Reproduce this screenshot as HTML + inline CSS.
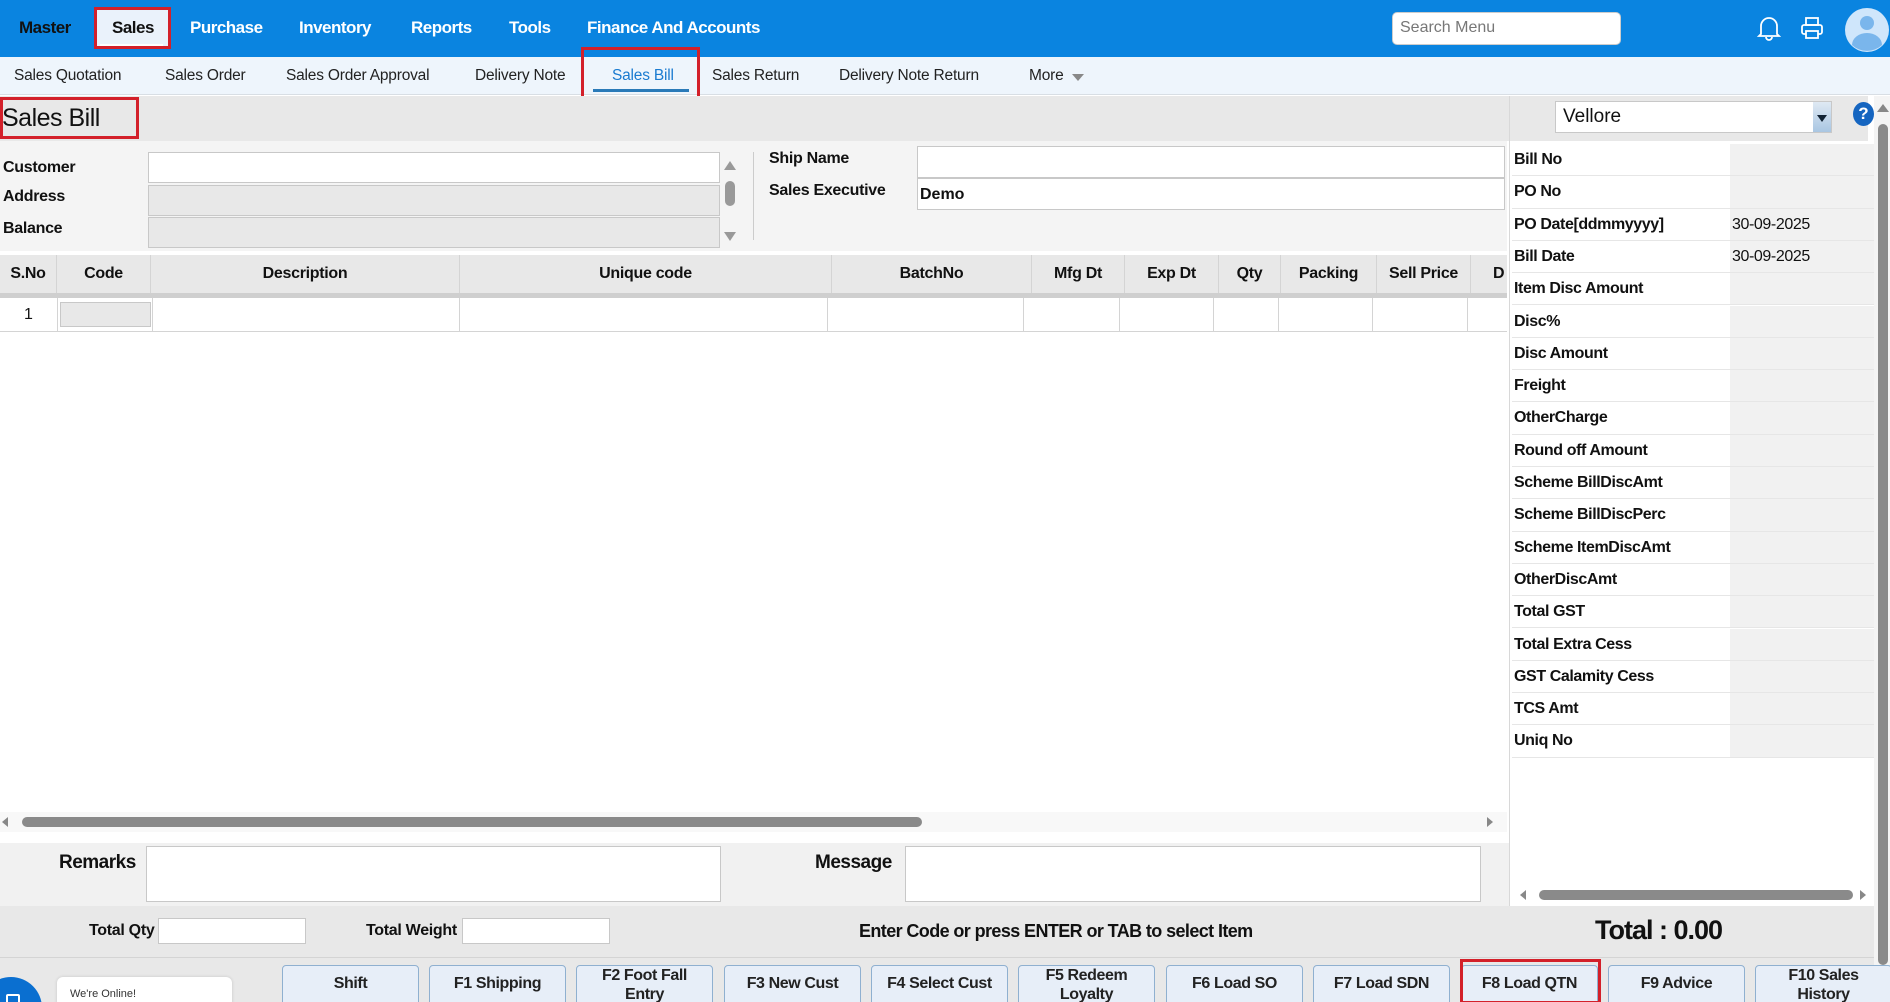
<!DOCTYPE html>
<html><head><meta charset="utf-8"><style>
*{box-sizing:border-box;margin:0;padding:0}
html{width:1890px;height:1002px;overflow:hidden}
body{width:1890px;height:1002px;overflow:hidden;position:relative;background:#fff;font-family:"Liberation Sans",sans-serif;color:#111}
.a{position:absolute}
.top{left:0;top:0;width:1890px;height:57px;background:#0a84e0}
.m{top:18px;font-size:17px;font-weight:bold;color:#fff;letter-spacing:-0.5px}
.sub{left:0;top:57px;width:1890px;height:38px;background:#eef5fc;border-bottom:1px solid #d8dee4}
.s{top:67px;font-size:15.5px;color:#222;letter-spacing:-0.2px}
.red{border:3px solid #d3202a}
.lbl{font-size:16px;font-weight:bold;letter-spacing:-0.3px}
.inp{background:#fff;border:1px solid #c8c8c8}
.ginp{background:#e8e8e8;border:1px solid #c8c8c8}
.th{top:255px;height:38px;background:#e8e8e8;border-right:1px solid #d4d4d4;font-size:16px;font-weight:bold;text-align:center;line-height:38px;letter-spacing:-0.3px}
.td{top:298px;height:34px;border-right:1px solid #d4d4d4;border-bottom:1px solid #d4d4d4}
.rr{left:1512px;width:362px;height:32.3px;border-bottom:1px solid #e6e6e6;font-size:16px;font-weight:bold;letter-spacing:-0.4px}
.rr span{position:absolute;left:2px;top:7px}
.rr i{position:absolute;left:218px;top:0;width:144px;height:100%;background:#f1f1f1;font-style:normal;font-weight:normal;padding:7px 0 0 2px}
.btn{top:965px;width:137px;height:45px;background:#e7eef8;border:1px solid #8fb0d0;border-radius:4px;font-size:16px;font-weight:bold;text-align:center;letter-spacing:-0.4px;color:#222}
</style></head><body>
<div class="a top"></div>
<div class="a m" style="left:19px;color:#111">Master</div>
<div class="a" style="left:95px;top:7px;width:76px;height:42px;background:#eaf2fb" ></div>
<div class="a red" style="left:94px;top:7px;width:77px;height:42px"></div>
<div class="a" style="left:100px;top:44px;width:63px;height:2px;background:#fff"></div>
<div class="a m" style="left:112px;color:#111">Sales</div>
<div class="a m" style="left:190px">Purchase</div>
<div class="a m" style="left:299px">Inventory</div>
<div class="a m" style="left:411px">Reports</div>
<div class="a m" style="left:509px">Tools</div>
<div class="a m" style="left:587px">Finance And Accounts</div>
<div class="a" style="left:1392px;top:12px;width:229px;height:33px;background:#fff;border-radius:5px;border:1px solid #ccc;font-size:16px;color:#777;padding:6px 0 0 7px">Search Menu</div>
<svg class="a" style="left:1756px;top:14px" width="26" height="28" viewBox="0 0 26 28"><path d="M5 20V12a8 8 0 0 1 16 0v8l2 2H3z M10 23a3 3 0 0 0 6 0" fill="none" stroke="#fff" stroke-width="1.8"/></svg>
<svg class="a" style="left:1800px;top:16px" width="24" height="24" viewBox="0 0 24 24"><rect x="6" y="2" width="12" height="7" fill="none" stroke="#fff" stroke-width="1.8"/><rect x="2" y="9" width="20" height="9" rx="2" fill="none" stroke="#fff" stroke-width="1.8"/><rect x="6" y="15" width="12" height="7" fill="#0a84e0" stroke="#fff" stroke-width="1.8"/></svg>
<svg class="a" style="left:1844px;top:7px" width="46" height="46" viewBox="0 0 46 46"><circle cx="23" cy="23" r="22" fill="#cfe6fb"/><circle cx="23" cy="16" r="7" fill="#7ab6ec"/><path d="M8 38a15 12 0 0 1 30 0a22 22 0 0 1-30 0z" fill="#7ab6ec"/></svg>

<div class="a sub"></div>
<div class="a s" style="left:14px">Sales Quotation</div>
<div class="a s" style="left:165px">Sales Order</div>
<div class="a s" style="left:286px">Sales Order Approval</div>
<div class="a s" style="left:475px">Delivery Note</div>
<div class="a s" style="left:612px;color:#1a7bd0">Sales Bill</div>
<div class="a" style="left:593px;top:89px;width:96px;height:3px;background:#2a7ab8"></div>
<div class="a red" style="left:581px;top:47px;width:119px;height:57px"></div>
<div class="a s" style="left:712px">Sales Return</div>
<div class="a s" style="left:839px">Delivery Note Return</div>
<div class="a s" style="left:1029px">More</div>
<div class="a" style="left:1072px;top:74px;border-left:6px solid transparent;border-right:6px solid transparent;border-top:7px solid #888"></div>

<div class="a" style="left:0;top:96px;width:1868px;height:45px;background:#e8e8e8"></div>
<div class="a red" style="left:0;top:97px;width:139px;height:42px"></div>
<div class="a" style="left:2px;top:104px;font-size:25px;letter-spacing:-0.5px">Sales Bill</div>
<div class="a inp" style="left:1555px;top:101px;width:277px;height:32px;font-size:19px;padding:4px 0 0 7px">Vellore</div>
<div class="a" style="left:1813px;top:102px;width:18px;height:30px;background:linear-gradient(#dfe9f3,#a9c6e2)"></div>
<div class="a" style="left:1817px;top:115px;border-left:5px solid transparent;border-right:5px solid transparent;border-top:7px solid #123"></div>
<div class="a" style="left:1853px;top:102px;width:21px;height:24px;border-radius:50%;background:#1565c0;color:#fff;font-weight:bold;font-size:17px;text-align:center;line-height:24px">?</div>

<div class="a" style="left:0;top:141px;width:1507px;height:110px;background:#f4f4f4"></div>
<div class="a lbl" style="left:3px;top:159px">Customer</div>
<div class="a lbl" style="left:3px;top:188px">Address</div>
<div class="a lbl" style="left:3px;top:220px">Balance</div>
<div class="a inp" style="left:148px;top:152px;width:572px;height:31px"></div>
<div class="a ginp" style="left:148px;top:185px;width:572px;height:31px"></div>
<div class="a ginp" style="left:148px;top:217px;width:572px;height:31px"></div>
<div class="a" style="left:724px;top:161px;border-left:6px solid transparent;border-right:6px solid transparent;border-bottom:9px solid #999"></div>
<div class="a" style="left:725px;top:181px;width:10px;height:25px;border-radius:5px;background:#999"></div>
<div class="a" style="left:724px;top:232px;border-left:6px solid transparent;border-right:6px solid transparent;border-top:9px solid #999"></div>
<div class="a" style="left:753px;top:152px;width:1px;height:88px;background:#ccc"></div>
<div class="a lbl" style="left:769px;top:150px">Ship Name</div>
<div class="a lbl" style="left:769px;top:182px">Sales Executive</div>
<div class="a inp" style="left:917px;top:146px;width:588px;height:32px"></div>
<div class="a inp" style="left:917px;top:178px;width:588px;height:32px;font-size:16px;font-weight:bold;padding:7px 0 0 2px">Demo</div>

<div class="a" style="left:0;top:293px;width:1507px;height:5px;background:#cfcfcf"></div>
<div class="a th" style="left:0;width:57px">S.No</div>
<div class="a th" style="left:57px;width:94px">Code</div>
<div class="a th" style="left:151px;width:309px">Description</div>
<div class="a th" style="left:460px;width:372px">Unique code</div>
<div class="a th" style="left:832px;width:200px">BatchNo</div>
<div class="a th" style="left:1032px;width:93px">Mfg Dt</div>
<div class="a th" style="left:1125px;width:94px">Exp Dt</div>
<div class="a th" style="left:1219px;width:62px">Qty</div>
<div class="a th" style="left:1281px;width:96px">Packing</div>
<div class="a th" style="left:1377px;width:94px">Sell Price</div>
<div class="a th" style="left:1471px;width:36px;text-align:left;padding-left:22px;border:0">D</div>
<div class="a td" style="left:0;width:58px;font-size:16px;text-align:center;line-height:34px">1</div>
<div class="a td" style="left:58px;width:95px"></div>
<div class="a ginp" style="left:60px;top:302px;width:91px;height:25px"></div>
<div class="a td" style="left:153px;width:307px"></div>
<div class="a td" style="left:460px;width:368px"></div>
<div class="a td" style="left:828px;width:196px"></div>
<div class="a td" style="left:1024px;width:96px"></div>
<div class="a td" style="left:1120px;width:94px"></div>
<div class="a td" style="left:1214px;width:65px"></div>
<div class="a td" style="left:1279px;width:94px"></div>
<div class="a td" style="left:1373px;width:95px"></div>
<div class="a td" style="left:1468px;width:39px;border-right:0"></div>

<div class="a" style="left:0;top:812px;width:1507px;height:20px;background:#f8f8f8"></div>
<div class="a" style="left:2px;top:817px;border-top:5px solid transparent;border-bottom:5px solid transparent;border-right:6px solid #888"></div>
<div class="a" style="left:22px;top:817px;width:900px;height:10px;border-radius:5px;background:#8a8a8a"></div>
<div class="a" style="left:1487px;top:817px;border-top:5px solid transparent;border-bottom:5px solid transparent;border-left:6px solid #888"></div>

<div class="a" style="left:0;top:843px;width:1509px;height:63px;background:#f1f1f1"></div>
<div class="a" style="left:59px;top:852px;font-size:19px;font-weight:bold;letter-spacing:-0.5px">Remarks</div>
<div class="a inp" style="left:146px;top:846px;width:575px;height:56px"></div>
<div class="a" style="left:815px;top:852px;font-size:19px;font-weight:bold;letter-spacing:-0.5px">Message</div>
<div class="a inp" style="left:905px;top:846px;width:576px;height:56px"></div>

<div class="a" style="left:1509px;top:96px;width:1px;height:810px;background:#d8d8d8"></div>
<div class="a" style="left:1510px;top:141px;width:364px;height:765px;background:#fff"></div>
<div class="a rr" style="top:144px"><span>Bill No</span><i></i></div>
<div class="a rr" style="top:176.3px"><span>PO No</span><i></i></div>
<div class="a rr" style="top:208.6px"><span>PO Date[ddmmyyyy]</span><i>30-09-2025</i></div>
<div class="a rr" style="top:240.9px"><span>Bill Date</span><i>30-09-2025</i></div>
<div class="a rr" style="top:273.2px"><span>Item Disc Amount</span><i></i></div>
<div class="a rr" style="top:305.5px"><span>Disc%</span><i></i></div>
<div class="a rr" style="top:337.8px"><span>Disc Amount</span><i></i></div>
<div class="a rr" style="top:370.1px"><span>Freight</span><i></i></div>
<div class="a rr" style="top:402.4px"><span>OtherCharge</span><i></i></div>
<div class="a rr" style="top:434.7px"><span>Round off Amount</span><i></i></div>
<div class="a rr" style="top:467px"><span>Scheme BillDiscAmt</span><i></i></div>
<div class="a rr" style="top:499.3px"><span>Scheme BillDiscPerc</span><i></i></div>
<div class="a rr" style="top:531.6px"><span>Scheme ItemDiscAmt</span><i></i></div>
<div class="a rr" style="top:563.9px"><span>OtherDiscAmt</span><i></i></div>
<div class="a rr" style="top:596.2px"><span>Total GST</span><i></i></div>
<div class="a rr" style="top:628.5px"><span>Total Extra Cess</span><i></i></div>
<div class="a rr" style="top:660.8px"><span>GST Calamity Cess</span><i></i></div>
<div class="a rr" style="top:693.1px"><span>TCS Amt</span><i></i></div>
<div class="a rr" style="top:725.4px"><span>Uniq No</span><i></i></div>
<div class="a" style="left:1520px;top:890px;border-top:5px solid transparent;border-bottom:5px solid transparent;border-right:6px solid #888"></div>
<div class="a" style="left:1539px;top:890px;width:314px;height:10px;border-radius:5px;background:#8a8a8a"></div>
<div class="a" style="left:1860px;top:890px;border-top:5px solid transparent;border-bottom:5px solid transparent;border-left:6px solid #888"></div>

<div class="a" style="left:1874px;top:96px;width:16px;height:906px;background:#f4f4f4"></div>
<div class="a" style="left:1877px;top:104px;border-left:6px solid transparent;border-right:6px solid transparent;border-bottom:8px solid #888"></div>
<div class="a" style="left:1878px;top:124px;width:10px;height:841px;border-radius:5px;background:#8a8a8a"></div>
<div class="a" style="left:1877px;top:982px;border-left:6px solid transparent;border-right:6px solid transparent;border-top:8px solid #888"></div>

<div class="a" style="left:0;top:906px;width:1874px;height:96px;background:#e8e8e8"></div>
<div class="a" style="left:0;top:957px;width:1874px;height:1px;background:#d4d4d4"></div>
<div class="a lbl" style="left:89px;top:922px;font-size:16px">Total Qty</div>
<div class="a inp" style="left:158px;top:918px;width:148px;height:26px"></div>
<div class="a lbl" style="left:366px;top:922px;font-size:16px">Total Weight</div>
<div class="a inp" style="left:462px;top:918px;width:148px;height:26px"></div>
<div class="a lbl" style="left:859px;top:921px;font-size:18px;letter-spacing:-0.6px">Enter Code or press ENTER or TAB to select Item</div>
<div class="a" style="left:1595px;top:915px;font-size:27px;font-weight:bold;letter-spacing:-1px">Total : 0.00</div>

<div class="a" style="left:0;top:0;width:1890px;height:1002px;overflow:hidden">
<div class="a btn" style="left:282px;line-height:36px">Shift</div>
<div class="a btn" style="left:429px;line-height:36px">F1 Shipping</div>
<div class="a btn" style="left:576px;line-height:19px;padding-top:0">F2 Foot Fall<br>Entry</div>
<div class="a btn" style="left:724px;line-height:36px">F3 New Cust</div>
<div class="a btn" style="left:871px;line-height:36px">F4 Select Cust</div>
<div class="a btn" style="left:1018px;line-height:19px;padding-top:0">F5 Redeem<br>Loyalty</div>
<div class="a btn" style="left:1166px;line-height:36px">F6 Load SO</div>
<div class="a btn" style="left:1313px;line-height:36px">F7 Load SDN</div>
<div class="a btn" style="left:1461px;line-height:36px">F8 Load QTN</div>
<div class="a red" style="left:1460px;top:959px;width:141px;height:45px"></div>
<div class="a btn" style="left:1608px;line-height:36px">F9 Advice</div>
<div class="a btn" style="left:1755px;line-height:19px;padding-top:0">F10 Sales<br>History</div>
<div class="a" style="left:-20px;top:977px;width:62px;height:62px;border-radius:50%;background:#0a6fd0"></div>
<div class="a" style="left:6px;top:994px;width:14px;height:10px;border:2px solid #fff;border-radius:2px"></div>
<div class="a" style="left:57px;top:977px;width:175px;height:30px;background:#fff;border-radius:6px;box-shadow:0 0 3px rgba(0,0,0,.15);font-size:11px;color:#333;padding:11px 0 0 13px">We're Online!</div>
</div>
</body></html>
